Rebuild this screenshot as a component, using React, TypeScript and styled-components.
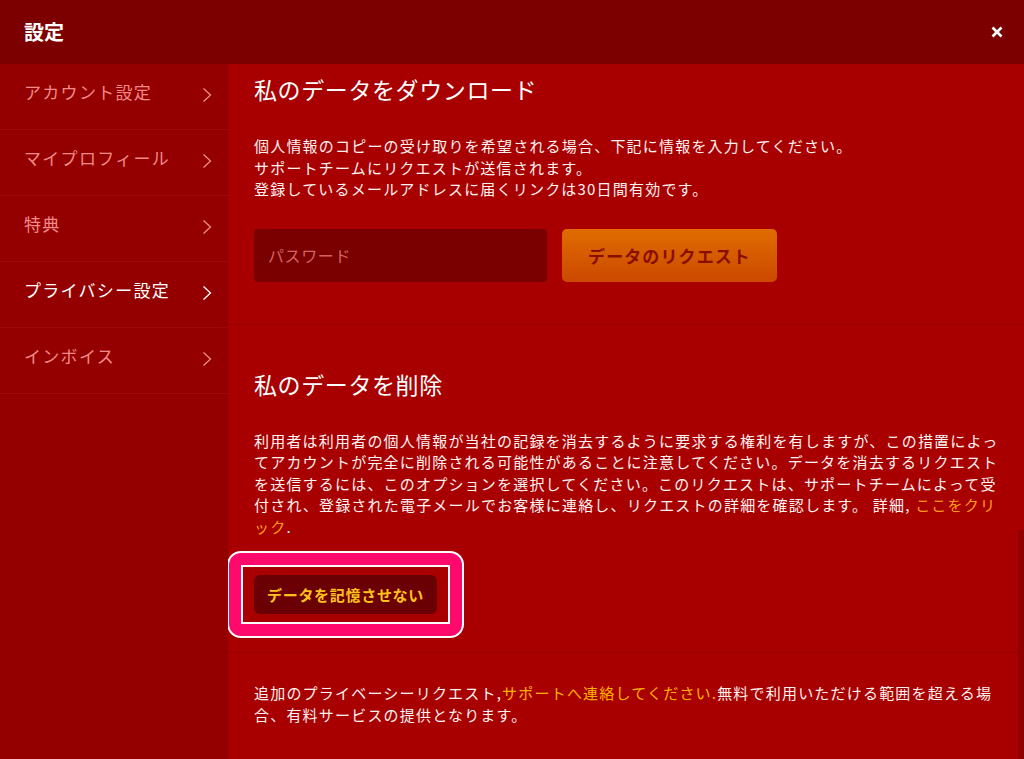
import styled, { createGlobalStyle } from 'styled-components';

const GlobalStyle = createGlobalStyle`
  html, body {
    margin: 0;
    padding: 0;
    height: 100%;
  }
  body {
    font-family: "Noto Sans CJK JP", "Noto Sans", sans-serif;
    background: #a80000;
    overflow: hidden;
  }
  #root {
    height: 100%;
  }
`;

const Page = styled.div`
  display: flex;
  flex-direction: column;
  height: 100vh;
`;

const Header = styled.header`
  height: 64px;
  flex-shrink: 0;
  background: #7d0000;
  display: flex;
  align-items: center;
  justify-content: space-between;
  padding: 0 21px 0 24px;
  box-sizing: border-box;
`;

const Title = styled.h1`
  margin: 0;
  font-size: 20px;
  font-weight: 700;
  color: #ffffff;
  line-height: 1;
`;

const CloseButton = styled.button`
  border: none;
  background: none;
  padding: 0;
  width: 12px;
  height: 12px;
  display: flex;
  cursor: pointer;
`;

const Body = styled.div`
  flex: 1;
  display: flex;
  min-height: 0;
`;

const Sidebar = styled.nav`
  width: 228px;
  flex-shrink: 0;
  background: #940000;
`;

const MenuItem = styled.a<{ $active?: boolean }>`
  display: flex;
  justify-content: space-between;
  align-items: flex-start;
  height: 66px;
  box-sizing: border-box;
  padding: 17px 16px 0 24px;
  border-bottom: 1px solid #9e0909;
  color: ${(p) => (p.$active ? '#ffffff' : '#f28a8a')};
  font-size: 17px;
  letter-spacing: 1.3px;
  line-height: 22px;
  text-decoration: none;
  cursor: pointer;

  svg {
    margin-top: 6px;
    flex-shrink: 0;
  }
`;

const Content = styled.main`
  flex: 1;
  position: relative;
  overflow: hidden;
  background: #a80000;
`;

const Section = styled.section<{ $top: number; $bottom: number }>`
  padding: ${(p) => p.$top}px 18px ${(p) => p.$bottom}px 26px;
  border-bottom: 1px solid #9a0000;

  &:last-of-type {
    border-bottom: none;
  }
`;

const SectionTitle = styled.h2`
  margin: 0 0 30px;
  font-size: 23px;
  font-weight: 400;
  letter-spacing: 0.6px;
  line-height: 32px;
  color: #ffffff;
`;

const Text = styled.p`
  margin: 0;
  font-size: 15px;
  letter-spacing: 1.2px;
  line-height: 21.5px;
  color: #fbf1f1;
  line-break: loose;
`;

const TextLink = styled.a<{ $tone: string }>`
  color: ${(p) => p.$tone};
  text-decoration: none;
  cursor: pointer;
`;

const FormRow = styled.div`
  display: flex;
  gap: 15px;
  margin-top: 29px;
`;

const PasswordInput = styled.input`
  width: 293px;
  height: 53px;
  box-sizing: border-box;
  border: none;
  border-radius: 4px;
  background: #7a0000;
  padding: 0 14px;
  font-family: inherit;
  font-size: 16px;
  letter-spacing: 0.6px;
  color: #ffffff;
  outline: none;

  &::placeholder {
    color: #d56464;
  }
`;

const RequestButton = styled.button`
  width: 215px;
  height: 53px;
  border: none;
  border-radius: 5px;
  background: linear-gradient(180deg, #e06c00 0%, #cb4900 100%);
  font-family: inherit;
  font-size: 17px;
  font-weight: 700;
  letter-spacing: 1.1px;
  color: #8a0e00;
  cursor: pointer;
`;

const Highlight = styled.div`
  display: inline-block;
  margin: 14px 0 0 -27px;
  padding: 12px;
  border: 2px solid #ffffff;
  border-radius: 14px;
  background: #ff0a6c;
`;

const HighlightInner = styled.div`
  padding: 8px 11px;
  border: 2px solid #ffffff;
  background: #a80000;
`;

const ForgetButton = styled.button`
  display: block;
  height: 39px;
  padding: 0 13px;
  border: none;
  border-radius: 6px;
  background: #6a0004;
  font-family: inherit;
  font-size: 15px;
  font-weight: 700;
  letter-spacing: 0.7px;
  color: #ffc21c;
  cursor: pointer;
`;

const ScrollThumb = styled.div`
  position: absolute;
  right: 0;
  top: 466px;
  bottom: 0;
  width: 6px;
  border-radius: 3px 0 0 0;
  background: #8f0000;
`;

const menu = ['アカウント設定', 'マイプロフィール', '特典', 'プライバシー設定', 'インボイス'];

function Chevron() {
  return (
    <svg width="10" height="16" viewBox="0 0 10 16" fill="none">
      <path d="M1.5 1.5 L8.5 8 L1.5 14.5" stroke="currentColor" strokeWidth="1.3" />
    </svg>
  );
}

export default function App() {
  return (
    <Page>
      <GlobalStyle />
      <Header>
        <Title>設定</Title>
        <CloseButton aria-label="close">
          <svg width="12" height="12" viewBox="0 0 12 12">
            <path d="M1.5 1.5 L10.5 10.5 M10.5 1.5 L1.5 10.5" stroke="#ffffff" strokeWidth="2.6" />
          </svg>
        </CloseButton>
      </Header>
      <Body>
        <Sidebar>
          {menu.map((label) => (
            <MenuItem key={label} $active={label === 'プライバシー設定'}>
              <span>{label}</span>
              <Chevron />
            </MenuItem>
          ))}
        </Sidebar>
        <Content>
          <Section $top={9} $bottom={42}>
            <SectionTitle>私のデータをダウンロード</SectionTitle>
            <Text>
              個人情報のコピーの受け取りを希望される場合、下記に情報を入力してください。
              <br />
              サポートチームにリクエストが送信されます。
              <br />
              登録しているメールアドレスに届くリンクは30日間有効です。
            </Text>
            <FormRow>
              <PasswordInput type="password" placeholder="パスワード" />
              <RequestButton>データのリクエスト</RequestButton>
            </FormRow>
          </Section>
          <Section $top={43} $bottom={14}>
            <SectionTitle>私のデータを削除</SectionTitle>
            <Text>
              利用者は利用者の個人情報が当社の記録を消去するように要求する権利を有しますが、この措置によってアカウントが完全に削除される可能性があることに注意してください。データを消去するリクエストを送信するには、このオプションを選択してください。このリクエストは、サポートチームによって受付され、登録された電子メールでお客様に連絡し、リクエストの詳細を確認します。 詳細,{' '}
              <TextLink $tone="#ff9f1c">ここをクリック</TextLink>.
            </Text>
            <Highlight>
              <HighlightInner>
                <ForgetButton>データを記憶させない</ForgetButton>
              </HighlightInner>
            </Highlight>
          </Section>
          <Section $top={29} $bottom={30}>
            <Text>
              追加のプライベーシーリクエスト,<TextLink $tone="#ffb300">サポートへ連絡してください.</TextLink>無料で利用いただける範囲を超える場合、有料サービスの提供となります。
            </Text>
          </Section>
          <ScrollThumb />
        </Content>
      </Body>
    </Page>
  );
}
